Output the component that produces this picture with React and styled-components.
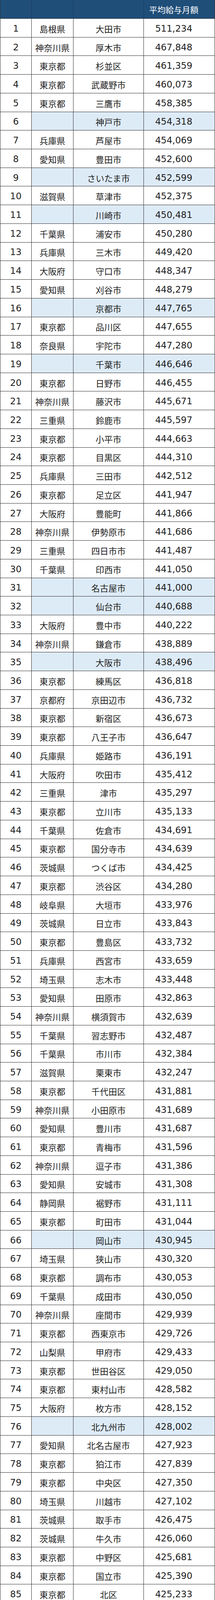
import React from 'react';
import styled, { createGlobalStyle } from 'styled-components';

const GlobalStyle = createGlobalStyle`
  html, body {
    margin: 0;
    padding: 0;
    background: #ffffff;
  }
  body {
    font-family: "Noto Sans CJK JP", "Noto Sans", sans-serif;
    color: #222222;
  }
`;

const rows = [
  ['島根県', '大田市', '511,234'],
  ['神奈川県', '厚木市', '467,848'],
  ['東京都', '杉並区', '461,359'],
  ['東京都', '武蔵野市', '460,073'],
  ['東京都', '三鷹市', '458,385'],
  ['', '神戸市', '454,318'],
  ['兵庫県', '芦屋市', '454,069'],
  ['愛知県', '豊田市', '452,600'],
  ['', 'さいたま市', '452,599'],
  ['滋賀県', '草津市', '452,375'],
  ['', '川崎市', '450,481'],
  ['千葉県', '浦安市', '450,280'],
  ['兵庫県', '三木市', '449,420'],
  ['大阪府', '守口市', '448,347'],
  ['愛知県', '刈谷市', '448,279'],
  ['', '京都市', '447,765'],
  ['東京都', '品川区', '447,655'],
  ['奈良県', '宇陀市', '447,280'],
  ['', '千葉市', '446,646'],
  ['東京都', '日野市', '446,455'],
  ['神奈川県', '藤沢市', '445,671'],
  ['三重県', '鈴鹿市', '445,597'],
  ['東京都', '小平市', '444,663'],
  ['東京都', '目黒区', '444,310'],
  ['兵庫県', '三田市', '442,512'],
  ['東京都', '足立区', '441,947'],
  ['大阪府', '豊能町', '441,866'],
  ['神奈川県', '伊勢原市', '441,686'],
  ['三重県', '四日市市', '441,487'],
  ['千葉県', '印西市', '441,050'],
  ['', '名古屋市', '441,000'],
  ['', '仙台市', '440,688'],
  ['大阪府', '豊中市', '440,222'],
  ['神奈川県', '鎌倉市', '438,889'],
  ['', '大阪市', '438,496'],
  ['東京都', '練馬区', '436,818'],
  ['京都府', '京田辺市', '436,732'],
  ['東京都', '新宿区', '436,673'],
  ['東京都', '八王子市', '436,647'],
  ['兵庫県', '姫路市', '436,191'],
  ['大阪府', '吹田市', '435,412'],
  ['三重県', '津市', '435,297'],
  ['東京都', '立川市', '435,133'],
  ['千葉県', '佐倉市', '434,691'],
  ['東京都', '国分寺市', '434,639'],
  ['茨城県', 'つくば市', '434,425'],
  ['東京都', '渋谷区', '434,280'],
  ['岐阜県', '大垣市', '433,976'],
  ['茨城県', '日立市', '433,843'],
  ['東京都', '豊島区', '433,732'],
  ['兵庫県', '西宮市', '433,659'],
  ['埼玉県', '志木市', '433,448'],
  ['愛知県', '田原市', '432,863'],
  ['神奈川県', '横須賀市', '432,639'],
  ['千葉県', '習志野市', '432,487'],
  ['千葉県', '市川市', '432,384'],
  ['滋賀県', '栗東市', '432,247'],
  ['東京都', '千代田区', '431,881'],
  ['神奈川県', '小田原市', '431,689'],
  ['愛知県', '豊川市', '431,687'],
  ['東京都', '青梅市', '431,596'],
  ['神奈川県', '逗子市', '431,386'],
  ['愛知県', '安城市', '431,308'],
  ['静岡県', '裾野市', '431,111'],
  ['東京都', '町田市', '431,044'],
  ['', '岡山市', '430,945'],
  ['埼玉県', '狭山市', '430,320'],
  ['東京都', '調布市', '430,053'],
  ['千葉県', '成田市', '430,050'],
  ['神奈川県', '座間市', '429,939'],
  ['東京都', '西東京市', '429,726'],
  ['山梨県', '甲府市', '429,433'],
  ['東京都', '世田谷区', '429,050'],
  ['東京都', '東村山市', '428,582'],
  ['大阪府', '枚方市', '428,152'],
  ['', '北九州市', '428,002'],
  ['愛知県', '北名古屋市', '427,923'],
  ['東京都', '狛江市', '427,839'],
  ['東京都', '中央区', '427,350'],
  ['埼玉県', '川越市', '427,102'],
  ['茨城県', '取手市', '426,475'],
  ['茨城県', '牛久市', '426,060'],
  ['東京都', '中野区', '425,681'],
  ['東京都', '国立市', '425,390'],
  ['東京都', '北区', '425,233'],
  ['岐阜県', '岐阜市', '425,112'],
  ['神奈川県', '葉山町', '425,042'],
  ['兵庫県', '川西市', '424,900'],
  ['静岡県', '掛川市', '424,814'],
  ['滋賀県', '大津市', '424,810'],
  ['', '広島市', '424,784'],
  ['東京都', '多摩市', '424,756'],
  ['京都府', '福知山市', '424,105'],
  ['大阪府', '松原市', '424,061'],
  ['東京都', '台東区', '423,982'],
  ['徳島県', '三好市', '423,894'],
  ['大阪府', '東大阪市', '423,722'],
  ['愛知県', 'みよし市', '423,257'],
  ['埼玉県', '桶川市', '423,221'],
  ['神奈川県', '綾瀬市', '423,162'],
];

const Table = styled.div`
  width: 550px;
  height: 4821px;
  overflow: hidden;
  box-sizing: border-box;
  border-left: 1px solid #2e2e2e;
  display: flex;
  flex-direction: column;
`;

const Row = styled.div`
  flex: 0 0 ${p => (p.$head ? '48px' : '47.73px')};
  height: ${p => (p.$head ? '48px' : '47.73px')};
  box-sizing: border-box;
  display: grid;
  grid-template-columns: 80px 107px 180px 182px;
  border-bottom: 1px solid #2e2e2e;
  background: ${p => (p.$head ? '#1f4e79' : '#ffffff')};
  overflow: hidden;
`;

const Cell = styled.div`
  box-sizing: border-box;
  height: 100%;
  background: ${p => (p.$hl ? '#ddebf7' : 'transparent')};
  border-right: 1px solid #2e2e2e;
  font-family: "Noto Sans CJK JP", "Noto Sans", sans-serif;
  font-size: 22px;
  line-height: 1;
  display: flex;
  align-items: center;
  justify-content: center;
  padding-top: 3px;
  white-space: nowrap;
`;

const NumCell = styled(Cell)`
  font-family: "DejaVu Sans", "Noto Sans", sans-serif;
  font-size: 23px;
  padding-top: 4px;
  padding-right: ${p => (p.$amount ? '28px' : '0')};
  color: #202020;
`;

const HeadCell = styled(Cell)`
  color: #ffffff;
  font-size: 21px;
  padding-top: 2px;
  padding-right: ${p => (p.$amount ? '28px' : '0')};
  border-right-color: ${p => (p.$amount ? '#2e2e2e' : '#173a5c')};
`;

export default function App() {
  return (
    <>
      <GlobalStyle />
      <Table>
        <Row $head>
          <HeadCell />
          <HeadCell />
          <HeadCell />
          <HeadCell $amount>平均給与月額</HeadCell>
        </Row>
        {rows.map(([pref, city, pay], i) => {
          const hl = pref === '';
          return (
            <Row key={i}>
              <NumCell>{i + 1}</NumCell>
              <Cell $hl={hl}>{pref}</Cell>
              <Cell $hl={hl}>{city}</Cell>
              <NumCell $hl={hl} $amount>{pay}</NumCell>
            </Row>
          );
        })}
      </Table>
    </>
  );
}
